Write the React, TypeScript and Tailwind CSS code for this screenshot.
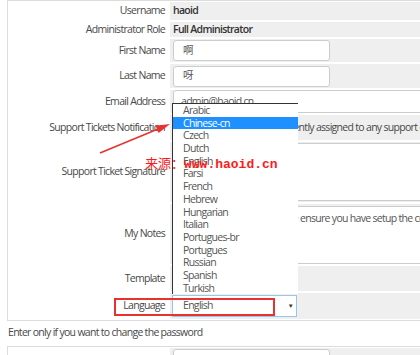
import React from "react";

const LANGS = [
  "Arabic",
  "Chinese-cn",
  "Czech",
  "Dutch",
  "English",
  "Farsi",
  "French",
  "Hebrew",
  "Hungarian",
  "Italian",
  "Portugues-br",
  "Portugues",
  "Russian",
  "Spanish",
  "Turkish",
];

function Row({
  label,
  h,
  children,
}: {
  label: string;
  h: string;
  children?: React.ReactNode;
}) {
  return (
    <>
      <div className={`bg-white flex items-center justify-end pr-[3px] whitespace-nowrap ${h}`}>
        {label}
      </div>
      <div className={`bg-[#efefef] flex items-center pl-[3px] whitespace-nowrap overflow-hidden ${h}`}>
        {children}
      </div>
    </>
  );
}

function Input({ value, w }: { value: string; w: string }) {
  return (
    <div
      className={`h-[21px] ${w} bg-white border border-[#ccc] rounded-[3px] flex items-center pl-[9px] text-[#555] font-['Open_Sans','Noto_Sans_CJK_SC',sans-serif]`}
    >
      {value}
    </div>
  );
}

export default function App() {
  return (
    <div className="relative w-[420px] h-[355px] overflow-hidden bg-white font-['Open_Sans',sans-serif] text-[10.5px] tracking-[-0.7px] text-[#484848]">
      {/* main card */}
      <div className="ml-[7px] w-[520px] border border-[#dcdcdc] p-[1px]">
        <div className="grid grid-cols-[159px_1fr] gap-[2px]">
          <Row label="Username" h="h-[18px]">
            <span className="font-semibold text-[#333]">haoid</span>
          </Row>
          <Row label="Administrator Role" h="h-[15px]">
            <span className="font-semibold text-[#333]">Full Administrator</span>
          </Row>
          <Row label="First Name" h="h-[23px]">
            <Input value="啊" w="w-[157px]" />
          </Row>
          <Row label="Last Name" h="h-[24px]">
            <Input value="呀" w="w-[157px]" />
          </Row>
          <Row label="Email Address" h="h-[23px]">
            <div className="h-[23px] w-[320px] bg-white border border-[#ccc] rounded-[3px] flex items-center pl-[7px] text-[#555]">
              admin@haoid.cn
            </div>
          </Row>
          <Row label="Support Tickets Notification" h="h-[25px]">
            <span className="inline-block w-[12px] h-[12px] border border-[#999] bg-white rounded-[2px] mr-[6px]" />
            <span>Mail me new tickets currently assigned to any support department</span>
          </Row>
          <Row label="Support Ticket Signature" h="h-[60px]">
            <div className="h-[58px] w-[320px] bg-white border border-[#ccc] rounded-[3px]" />
          </Row>
          <Row label="My Notes" h="h-[60px]">
            <div className="h-[58px] w-[320px] bg-white border border-[#ccc] rounded-[3px] self-end pl-[4px] pr-[8px] pt-[4px] text-[#555]">
              All your private notes. Please ensure you have setup the cron job
            </div>
          </Row>
          <Row label="Template" h="h-[25px]">
            <span className="text-[#555] pl-[10px]">Blend</span>
          </Row>
          <Row label="Language" h="h-[26px]">
            <div className="-ml-[1px] h-[22px] w-[125px] bg-white border border-[#9cc3ea] flex items-center justify-between pl-[10px] pr-[3px] text-[#555]">
              <span>English</span>
              <span className="text-[6px] text-[#333]">▼</span>
            </div>
          </Row>
        </div>
      </div>

      <div className="h-[25px] pt-[4px] pl-[8px] leading-[14px] text-[#484848]">
        Enter only if you want to change the password
      </div>

      <div className="ml-[7px] w-[520px] border border-[#dcdcdc] p-[1px]">
        <div className="grid grid-cols-[159px_1fr] gap-[2px]">
          <div className="bg-white h-[30px] flex items-start justify-end pr-[3px] pt-[10px]">Password</div>
          <div className="bg-[#efefef] h-[30px] pl-[3px] pt-[1px]">
            <div className="h-[24px] w-[157px] bg-white border border-[#ccc] rounded-[3px]" />
          </div>
        </div>
      </div>

      {/* open dropdown list */}
      <div className="absolute left-[172px] top-[103px] w-[126px] bg-white border-l border-t border-[#333] text-[#555]">
        {LANGS.map((l) => (
          <div
            key={l}
            className={`h-[12.7px] leading-[12.7px] pl-[10px] ${
              l === "Chinese-cn" ? "bg-[#1e90ff] text-white" : ""
            }`}
          >
            {l}
          </div>
        ))}
      </div>

      {/* red annotation rectangle */}
      <div className="absolute left-[114px] top-[298px] w-[161px] h-[18px] border-2 border-[#e8322d]" />

      {/* red arrow */}
      <svg className="absolute left-0 top-0 pointer-events-none" width="420" height="355" viewBox="0 0 420 355">
        <line x1="100" y1="153" x2="158" y2="129" stroke="#e8322d" strokeWidth="1.6" />
        <polygon points="170,124 158.6,133.1 155.6,125.7" fill="#e8322d" />
      </svg>

      {/* watermark */}
      <div className="absolute left-[145px] top-[153px] flex items-baseline text-[#ff1a1a] whitespace-nowrap tracking-normal">
        <span className="font-['Noto_Sans_CJK_SC',sans-serif] text-[13px]">来源：</span>
        <span className="font-['Liberation_Mono',monospace] font-bold text-[13px]">www.haoid.cn</span>
      </div>
    </div>
  );
}
